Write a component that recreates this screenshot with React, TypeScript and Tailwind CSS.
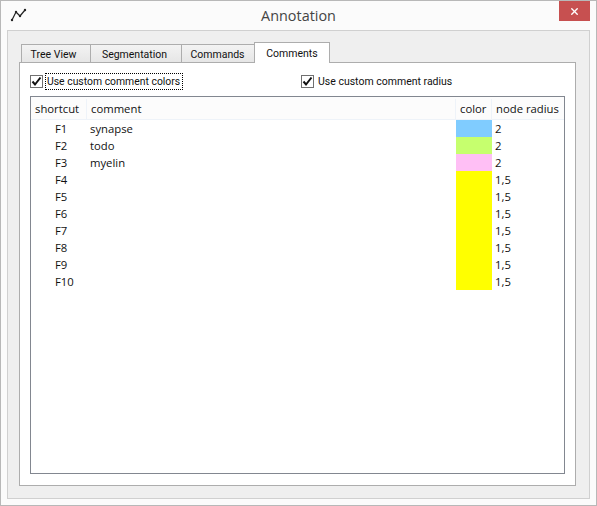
import { X } from "lucide-react";

const rows = [
  { key: "F1", comment: "synapse", color: "bg-[#80ccff]", radius: "2" },
  { key: "F2", comment: "todo", color: "bg-[#c6ff6e]", radius: "2" },
  { key: "F3", comment: "myelin", color: "bg-[#ffbff5]", radius: "2" },
  { key: "F4", comment: "", color: "bg-[#ffff00]", radius: "1,5" },
  { key: "F5", comment: "", color: "bg-[#ffff00]", radius: "1,5" },
  { key: "F6", comment: "", color: "bg-[#ffff00]", radius: "1,5" },
  { key: "F7", comment: "", color: "bg-[#ffff00]", radius: "1,5" },
  { key: "F8", comment: "", color: "bg-[#ffff00]", radius: "1,5" },
  { key: "F9", comment: "", color: "bg-[#ffff00]", radius: "1,5" },
  { key: "F10", comment: "", color: "bg-[#ffff00]", radius: "1,5" },
];

const tabs = [
  { label: "Tree View", width: "w-[70px] pr-[5px]" },
  { label: "Segmentation", width: "w-[92px] pr-[3px]" },
  { label: "Commands", width: "w-[74px] pr-px" },
];

function CheckBox() {
  return (
    <span className="mt-[2px] flex h-[13px] w-[13px] shrink-0 items-center justify-center border border-[#707070] bg-white">
      <svg width="11" height="11" viewBox="0 0 11 11" fill="none">
        <path d="M1.5 5.5 L4 8.5 L9.5 1.5" stroke="#111" strokeWidth="2" />
      </svg>
    </span>
  );
}

export default function App() {
  return (
    <div className="flex h-[506px] w-[597px] flex-col border border-[#b8b8b8] bg-[#fbfbfb] font-['Roboto',sans-serif] text-[10.5px] text-[#111]">
      {/* Title bar */}
      <div className="flex h-[29px] shrink-0 items-start">
        <div className="ml-[9px] mt-[7px] w-[28px]">
          <svg width="18" height="14" viewBox="0 0 18 14" fill="none">
            <path d="M2 12 L6 4 L10 8 L15 2" stroke="#222" strokeWidth="1.2" />
            <circle cx="2" cy="12" r="1.2" fill="#222" />
            <circle cx="6" cy="4" r="1.2" fill="#222" />
            <circle cx="10" cy="8" r="1.2" fill="#222" />
            <circle cx="15" cy="2" r="1.2" fill="#222" />
          </svg>
        </div>
        <div className="flex-1 pt-[4px] text-center font-['Open_Sans',sans-serif] text-[14.4px] leading-[22px] text-[#444]">
          Annotation
        </div>
        <div className="mr-[6px] flex h-[20px] w-[31px] items-center justify-center bg-[#c75050]">
          <X size={11} color="white" strokeWidth={3} />
        </div>
      </div>

      {/* Client area */}
      <div className="mx-[6px] flex flex-1 flex-col border border-[#d0d0d0] bg-[#efefef] pl-[11px] pr-[13px] pt-[11px]">
        <div className="z-10 -mb-px flex h-[21px] items-end pl-[2px]">
          {tabs.map((tab) => (
            <div
              key={tab.label}
              className={`${tab.width} -mr-px mb-px flex h-[18px] items-center justify-center border border-b-0 border-[#adadad] bg-gradient-to-b from-[#f3f3f3] to-[#e6e6e6] pt-[2px]`}
            >
              {tab.label}
            </div>
          ))}
          <div className="z-10 flex h-[21px] w-[76px] items-start justify-center border border-b-0 border-[#adadad] bg-white pt-[3px]">
            Comments
          </div>
        </div>

        <div className="h-[424px] border border-[#adadad] bg-white px-[10px] pt-[10px]">
          <div className="flex h-[23px] items-start">
            <div className="flex w-[271px] items-start">
              <CheckBox />
              <span className="ml-[2px] flex h-[17px] w-[138px] items-center whitespace-nowrap border border-dotted border-black pl-px pt-px text-[10.4px]">
                Use custom comment colors
              </span>
            </div>
            <CheckBox />
            <span className="ml-[4px] flex h-[17px] items-center whitespace-nowrap pt-px">Use custom comment radius</span>
          </div>

          <div className="h-[378px] border border-[#828790] font-['Open_Sans',sans-serif] text-[11.3px]">
            <div className="flex h-[23px] border-b border-[#eef3f9] bg-[#fcfcfc] pt-[2px]">
              <div className="flex w-[56px] items-center border-r border-[#eef3f9] pl-[4px]">shortcut</div>
              <div className="flex w-[369px] items-center border-r border-[#eef3f9] pl-[4px]">comment</div>
              <div className="flex w-[36px] items-center border-r border-[#eef3f9] pl-[4px]">color</div>
              <div className="flex flex-1 items-center pl-[4px]">node radius</div>
            </div>
            {rows.map((row) => (
              <div key={row.key} className="flex h-[17px] leading-[17px]">
                <div className="w-[56px] pl-[24px]">{row.key}</div>
                <div className="w-[369px] pl-[3px]">{row.comment}</div>
                <div className={`w-[36px] ${row.color}`} />
                <div className="flex-1 pl-[3px]">{row.radius}</div>
              </div>
            ))}
          </div>
        </div>
      </div>
      <div className="h-[6px] shrink-0" />
    </div>
  );
}
